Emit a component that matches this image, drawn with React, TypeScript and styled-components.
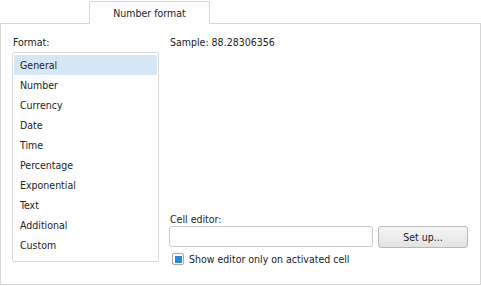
import React from "react";
import styled, { createGlobalStyle } from "styled-components";

const GlobalStyle = createGlobalStyle`
  html, body {
    margin: 0;
    padding: 0;
    background: #fff;
  }
  body {
    font-family: "DejaVu Sans Condensed", "DejaVu Sans", sans-serif;
    font-stretch: condensed;
    font-size: 10.5px;
    line-height: 14px;
    color: #222;
  }
`;

const Dialog = styled.div`
  width: 481px;
  height: 286px;
  display: flex;
  flex-direction: column;
`;

const TabBar = styled.div`
  display: flex;
  padding: 1px 0 0 89px;
`;

const Tab = styled.div`
  position: relative;
  z-index: 1;
  width: 121px;
  height: 23px;
  box-sizing: border-box;
  margin-bottom: -1px;
  border: 1px solid #d6d6d6;
  border-bottom: none;
  border-radius: 2px 2px 0 0;
  background: #fff;
  display: flex;
  align-items: center;
  justify-content: center;
  padding-bottom: 1px;
`;

const Panel = styled.div`
  box-sizing: border-box;
  width: 481px;
  height: 262px;
  border: 1px solid #d6d6d6;
  padding: 11px 12px 0 11px;
  display: grid;
  grid-template-columns: 147px 1fr;
  column-gap: 10px;
  align-items: start;
`;

const Column = styled.div`
  display: flex;
  flex-direction: column;
  height: 231px;
`;

const Label = styled.div<{ $gap?: number }>`
  height: 14px;
  margin-bottom: ${(p) => p.$gap ?? 0}px;
  padding-left: 1px;
  white-space: nowrap;
`;

const List = styled.ul`
  list-style: none;
  margin: 0;
  box-sizing: border-box;
  width: 147px;
  height: 210px;
  padding: 2px 1px 0 1px;
  border: 1px solid #d9d9d9;
  border-radius: 2px;
`;

const Item = styled.li<{ $selected?: boolean }>`
  box-sizing: border-box;
  height: 20px;
  padding: 1px 0 0 6px;
  line-height: 19px;
  background: ${(p) => (p.$selected ? "#d5e7f5" : "transparent")};
`;

const Spacer = styled.div`
  flex: 1;
`;

const InputRow = styled.div`
  display: flex;
  align-items: flex-start;
  gap: 5px;
  margin-bottom: 4px;
`;

const TextInput = styled.div`
  box-sizing: border-box;
  width: 204px;
  height: 21px;
  border: 1px solid #cbcbcb;
  border-radius: 3px;
  background: #fff;
`;

const Button = styled.button`
  box-sizing: border-box;
  width: 90px;
  height: 22px;
  padding: 0 0 1px;
  border: 1px solid #b9b9b9;
  border-radius: 3px;
  background: linear-gradient(#f6f6f6, #e2e2e2);
  font: inherit;
  color: inherit;
`;

const CheckRow = styled.label`
  display: flex;
  align-items: center;
  gap: 5px;
  height: 14px;
  padding-left: 3px;
`;

const CheckBox = styled.span`
  box-sizing: border-box;
  width: 12px;
  height: 12px;
  border: 1px solid #a9a9a9;
  border-radius: 2px;
  background: #fff;
  display: flex;
  align-items: center;
  justify-content: center;
  &::after {
    content: "";
    width: 7px;
    height: 7px;
    background: #2a8bd3;
  }
`;

const formats = [
  "General",
  "Number",
  "Currency",
  "Date",
  "Time",
  "Percentage",
  "Exponential",
  "Text",
  "Additional",
  "Custom",
];

export default function App() {
  return (
    <Dialog>
      <GlobalStyle />
      <TabBar>
        <Tab>Number format</Tab>
      </TabBar>
      <Panel>
        <Column>
          <Label $gap={3}>Format:</Label>
          <List>
            {formats.map((f, i) => (
              <Item key={f} $selected={i === 0}>
                {f}
              </Item>
            ))}
          </List>
        </Column>
        <Column>
          <Label>Sample: 88.28306356</Label>
          <Spacer />
          <Label>Cell editor:</Label>
          <InputRow>
            <TextInput />
            <Button>Set up...</Button>
          </InputRow>
          <CheckRow>
            <CheckBox />
            Show editor only on activated cell
          </CheckRow>
        </Column>
      </Panel>
    </Dialog>
  );
}
